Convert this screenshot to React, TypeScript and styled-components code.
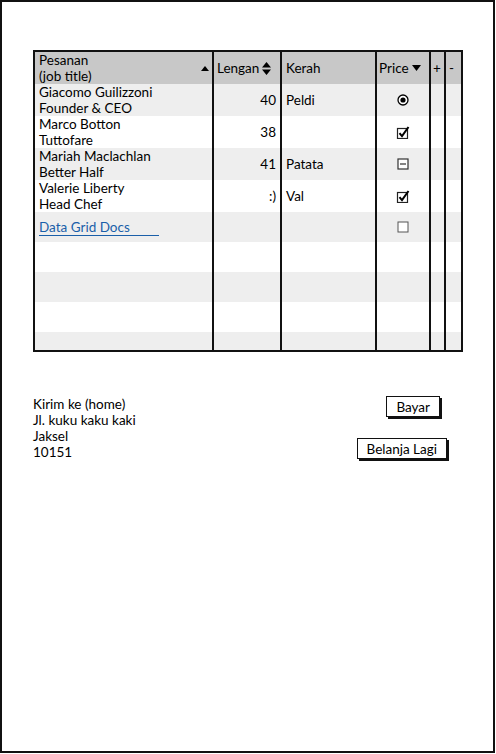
import styled, { createGlobalStyle } from 'styled-components'
import { FC, ReactNode } from 'react'

const GlobalStyle = createGlobalStyle`
	html, body {
		margin: 0;
		padding: 0;
		background: #ffffff;
	}
	body {
		font-family: Lato, 'Open Sans', sans-serif;
		font-size: 13.5px;
		color: #000000;
	}
`

const Frame = styled.div`
	box-sizing: border-box;
	width: 495px;
	height: 753px;
	border: 2px solid #111111;
	padding: 48px 0 0 31px;
`

const Grid = styled.div`
	box-sizing: border-box;
	width: 430px;
	height: 302px;
	border: 2px solid #111111;
	overflow: hidden;
	display: flex;
	flex-direction: column;
`

const Row = styled.div<{ $tone: 'head' | 'alt' | 'plain'; $h: number }>`
	display: flex;
	flex: 0 0 ${p => p.$h}px;
	height: ${p => p.$h}px;
	background: ${p => (p.$tone === 'head' ? '#c8c8c8' : p.$tone === 'alt' ? '#eeeeee' : '#ffffff')};
`

const widths = [179, 68, 95, 54, 15, 15]

const Cell = styled.div<{ $col: number; $align?: 'left' | 'right' | 'center' }>`
	box-sizing: border-box;
	flex: 0 0 ${p => widths[p.$col]}px;
	width: ${p => widths[p.$col]}px;
	border-right: ${p => (p.$col === 5 ? 'none' : '2px solid #111111')};
	padding: 0 4px 0 4px;
	display: flex;
	align-items: center;
	justify-content: ${p => (p.$align === 'right' ? 'flex-end' : p.$align === 'center' ? 'center' : 'flex-start')};
	line-height: 16px;
	white-space: nowrap;
	overflow: hidden;
`

const HeadCell = styled(Cell)`
	justify-content: space-between;
	padding: 0 3px 0 4px;
`

const Stack = styled.div`
	display: flex;
	flex-direction: column;
`

const Link = styled.a`
	color: #1a5fa9;
	text-decoration: none;
	border-bottom: 1px solid #1a5fa9;
	width: 120px;
	line-height: 15px;
	margin-top: 1px;
`

const Arrow = styled.svg`
	flex: 0 0 auto;
	margin-left: 3px;
`

const Up = () => (
	<Arrow width="8" height="6" viewBox="0 0 8 6">
		<path d="M0 6 L4 1 L8 6 Z" fill="#000" />
	</Arrow>
)

const Down = () => (
	<Arrow width="9" height="6" viewBox="0 0 9 6">
		<path d="M0 0 L9 0 L4.5 6 Z" fill="#000" />
	</Arrow>
)

const Both = () => (
	<Arrow width="9" height="13" viewBox="0 0 9 13">
		<path d="M0 5.5 L4.5 0 L9 5.5 Z M0 7.5 L9 7.5 L4.5 13 Z" fill="#000" />
	</Arrow>
)

const Radio = () => (
	<svg width="12" height="12" viewBox="0 0 12 12">
		<circle cx="6" cy="6" r="5" fill="#fff" stroke="#000" strokeWidth="1.3" />
		<circle cx="6" cy="6" r="2.6" fill="#000" />
	</svg>
)

const Check = () => (
	<svg width="14" height="13" viewBox="0 0 14 13">
		<rect x="1.5" y="2.5" width="10" height="10" fill="#fff" stroke="#222" strokeWidth="1.2" />
		<path d="M3.5 7.2 L6 10.2 L12.5 1" fill="none" stroke="#000" strokeWidth="2" />
	</svg>
)

const Mixed = () => (
	<svg width="12" height="12" viewBox="0 0 12 12">
		<rect x="1" y="1" width="10" height="10" fill="#fff" stroke="#333" strokeWidth="1.2" />
		<path d="M3 6 L9 6" stroke="#333" strokeWidth="1.2" />
	</svg>
)

const Empty = () => (
	<svg width="12" height="12" viewBox="0 0 12 12">
		<rect x="1" y="1" width="10" height="10" fill="#fff" stroke="#555" strokeWidth="1" />
	</svg>
)

interface Person {
	name: string
	title: string
	lengan: string
	kerah: string
	mark: ReactNode
}

const people: Person[] = [
	{ name: 'Giacomo Guilizzoni', title: 'Founder & CEO', lengan: '40', kerah: 'Peldi', mark: <Radio /> },
	{ name: 'Marco Botton', title: 'Tuttofare', lengan: '38', kerah: '', mark: <Check /> },
	{ name: 'Mariah Maclachlan', title: 'Better Half', lengan: '41', kerah: 'Patata', mark: <Mixed /> },
	{ name: 'Valerie Liberty', title: 'Head Chef', lengan: ':)', kerah: 'Val', mark: <Check /> },
]

const EmptyRow: FC<{ tone: 'alt' | 'plain'; h: number }> = ({ tone, h }) => (
	<Row $tone={tone} $h={h}>
		{widths.map((_, i) => (
			<Cell key={i} $col={i} />
		))}
	</Row>
)

const Bottom = styled.div`
	display: flex;
	justify-content: space-between;
	width: 414px;
	margin-top: 44px;
`

const Address = styled.div`
	line-height: 16px;
`

const Buttons = styled.div`
	display: flex;
	flex-direction: column;
	align-items: flex-end;
	gap: 21px;
`

const Button = styled.button<{ $shift?: number }>`
	box-sizing: border-box;
	font-family: Lato, 'Open Sans', sans-serif;
	font-size: 13.5px;
	color: #000;
	background: #fff;
	border: 1.5px solid #111;
	box-shadow: 2px 2px 0 #111;
	height: 21px;
	padding: 0 9px;
	margin-right: ${p => p.$shift ?? 0}px;
	line-height: 18px;
`

export default function App() {
	return (
		<>
			<GlobalStyle />
			<Frame>
				<Grid>
					<Row $tone="head" $h={32}>
						<HeadCell $col={0}>
							<Stack>
								<span>Pesanan</span>
								<span>(job title)</span>
							</Stack>
							<Up />
						</HeadCell>
						<Cell $col={1} style={{ paddingLeft: 3 }}>
							Lengan
							<Both />
						</Cell>
						<Cell $col={2}>Kerah</Cell>
						<Cell $col={3} style={{ paddingLeft: 2 }}>
							Price
							<Down />
						</Cell>
						<Cell $col={4} style={{ paddingLeft: 2 }}>+</Cell>
						<Cell $col={5} style={{ paddingLeft: 3 }}>-</Cell>
					</Row>
					{people.map((p, i) => (
						<Row key={p.name} $tone={i % 2 === 0 ? 'alt' : 'plain'} $h={32}>
							<Cell $col={0}>
								<Stack>
									<span>{p.name}</span>
									<span>{p.title}</span>
								</Stack>
							</Cell>
							<Cell $col={1} $align="right">{p.lengan}</Cell>
							<Cell $col={2}>{p.kerah}</Cell>
							<Cell $col={3} $align="center">{p.mark}</Cell>
							<Cell $col={4} />
							<Cell $col={5} />
						</Row>
					))}
					<Row $tone="alt" $h={30}>
						<Cell $col={0}>
							<Link href="#">Data Grid Docs</Link>
						</Cell>
						<Cell $col={1} />
						<Cell $col={2} />
						<Cell $col={3} $align="center">
							<Empty />
						</Cell>
						<Cell $col={4} />
						<Cell $col={5} />
					</Row>
					<EmptyRow tone="plain" h={30} />
					<EmptyRow tone="alt" h={30} />
					<EmptyRow tone="plain" h={30} />
					<EmptyRow tone="alt" h={30} />
				</Grid>
				<Bottom>
					<Address>
						<div>Kirim ke (home)</div>
						<div>Jl. kuku kaku kaki</div>
						<div>Jaksel</div>
						<div>10151</div>
					</Address>
					<Buttons>
						<Button $shift={7}>Bayar</Button>
						<Button>Belanja Lagi</Button>
					</Buttons>
				</Bottom>
			</Frame>
		</>
	)
}
